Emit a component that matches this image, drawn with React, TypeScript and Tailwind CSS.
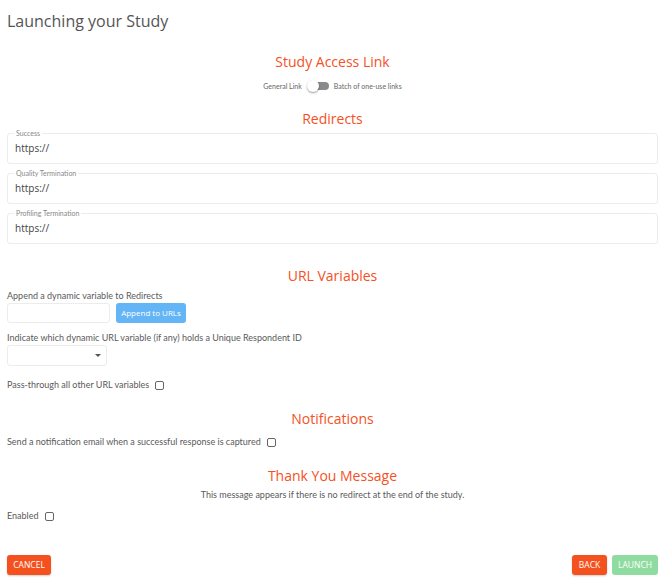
import React from "react";

const H = "font-['Open_Sans',sans-serif]";
const B = "font-['Lato',sans-serif]";

function Heading({ children, className = "" }: { children: React.ReactNode; className?: string }) {
  return (
    <div className={`${H} text-center text-[14px] leading-[20px] text-[#f4511e] ${className}`}>{children}</div>
  );
}

function Field({ label }: { label: string }) {
  return (
    <div className="relative h-[31px] rounded-[3px] border border-[#ececec]">
      <span className={`${B} absolute left-[6px] top-[-5px] bg-white px-[2px] text-[7px] leading-[8px] text-[#888]`}>{label}</span>
      <div className={`${H} pl-[7px] pt-[7px] text-[10px] leading-[14px] text-[#444]`}>https://</div>
    </div>
  );
}

function Check() {
  return <span className="inline-block h-[9px] w-[9px] rounded-[2px] border border-[#666]" />;
}

const btn = `${H} h-[20px] rounded-[3px] text-[8.5px] text-white`;

export default function App() {
  return (
    <div className={`${B} w-[670px] h-[587px] bg-white pl-[7px] pr-[12px] text-[#5a5a5a]`}>
      <div className={`${H} pt-[10px] text-[16px] leading-[22px] text-[#555]`}>Launching your Study</div>

      <Heading className="mt-[20px]">Study Access Link</Heading>
      <div className="mt-[8px] flex h-[12px] items-center justify-center gap-[5px] text-[7px] leading-[10px] text-[#666]">
        <span>General Link</span>
        <span className="relative inline-block h-[12px] w-[22px]">
          <span className="absolute left-[4px] top-[2px] h-[8px] w-[18px] rounded-full bg-[#8a8a8a]" />
          <span className="absolute left-0 top-0 h-[12px] w-[12px] rounded-full bg-white shadow-[0_1px_2px_rgba(0,0,0,0.4)]" />
        </span>
        <span>Batch of one-use links</span>
      </div>

      <Heading className="mt-[17px]">Redirects</Heading>
      <div className="mt-[4px] flex flex-col gap-[9px]">
        <Field label="Success" />
        <Field label="Quality Termination" />
        <Field label="Profiling Termination" />
      </div>

      <Heading className="mt-[22px]">URL Variables</Heading>
      <div className="mt-[4px] text-[9px] leading-[12px]">Append a dynamic variable to Redirects</div>
      <div className="mt-[1px] flex items-center gap-[6px]">
        <div className="h-[20px] w-[103px] rounded-[3px] border border-[#ececec]" />
        <button className={`${H} h-[20px] w-[70px] rounded-[3px] bg-[#64b5f6] text-[8px] text-white`}>Append to URLs</button>
      </div>
      <div className="mt-[9px] text-[9px] leading-[12px]">Indicate which dynamic URL variable (if any) holds a Unique Respondent ID</div>
      <div className="relative mt-[1px] h-[21px] w-[100px] rounded-[3px] border border-[#ececec]">
        <span className="absolute left-[87px] top-[8px] h-0 w-0 border-x-[3px] border-t-[3px] border-x-transparent border-t-[#555]" />
      </div>
      <div className="mt-[13px] flex items-center gap-[6px] text-[9px] leading-[12px]">
        <span>Pass-through all other URL variables</span>
        <Check />
      </div>

      <Heading className="mt-[18px]">Notifications</Heading>
      <div className="mt-[7px] flex items-center gap-[6px] text-[9px] leading-[12px]">
        <span>Send a notification email when a successful response is captured</span>
        <Check />
      </div>

      <Heading className="mt-[18px]">Thank You Message</Heading>
      <div className="mt-[3px] text-center text-[9px] leading-[12px]">This message appears if there is no redirect at the end of the study.</div>
      <div className="mt-[9px] flex items-center gap-[6px] text-[9px] leading-[12px]">
        <span>Enabled</span>
        <Check />
      </div>

      <div className="mt-[33px] flex items-center">
        <button className={`${btn} w-[44px] bg-[#f4511e] shadow-[0_1px_2px_rgba(0,0,0,0.2)]`}>CANCEL</button>
        <div className="flex-1" />
        <button className={`${btn} w-[35px] bg-[#f4511e] shadow-[0_1px_2px_rgba(0,0,0,0.2)]`}>BACK</button>
        <button className={`${btn} ml-[5px] w-[46px] bg-[#8fdca0]`}>LAUNCH</button>
      </div>
    </div>
  );
}
